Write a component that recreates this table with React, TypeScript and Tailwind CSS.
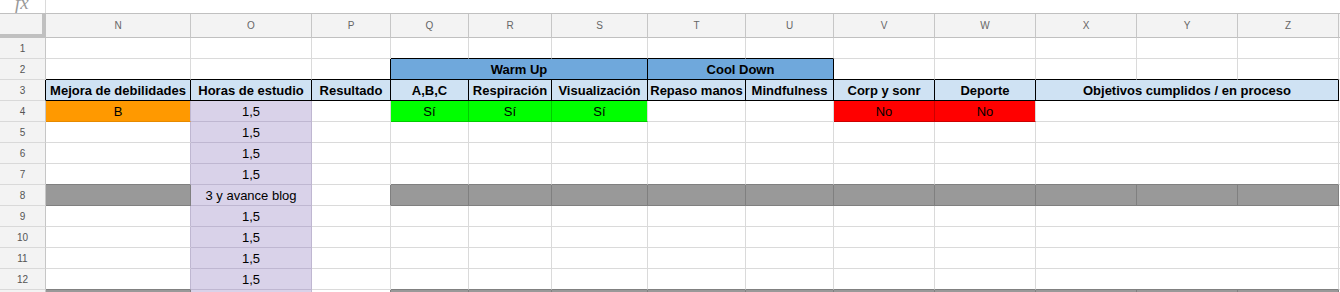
import clsx from "clsx";

type Fill = "white" | "orange" | "lav" | "green" | "red" | "gray" | "blue" | "pale";

const FILL: Record<Fill, string> = {
  white: "bg-white",
  orange: "bg-[#ff9900]",
  lav: "bg-[#d9d2e9]",
  green: "bg-[#00ff00]",
  red: "bg-[#ff0000]",
  gray: "bg-[#999999]",
  blue: "bg-[#6fa8dc]",
  pale: "bg-[#cfe2f3]",
};

const RIGHT: Record<string, string> = {
  light: "border-r-[#dadada]",
  dark: "border-r-[#808080]",
  lav: "border-r-[#bfb7d1]",
  green: "border-r-[#00cc00]",
  red: "border-r-[#cc0000]",
  orange: "border-r-[#e68a00]",
  black: "border-r-black",
};

const BOTTOM: Record<string, string> = {
  light: "border-b-[#dadada]",
  dark: "border-b-[#808080]",
  lav: "border-b-[#bfb7d1]",
  green: "border-b-[#00cc00]",
  red: "border-b-[#cc0000]",
  orange: "border-b-[#e68a00]",
  black: "border-b-black",
};

const LETTERS = ["N", "O", "P", "Q", "R", "S", "T", "U", "V", "W", "X", "Y", "Z"];

const GRID =
  "grid grid-cols-[46px_145px_121px_79px_78px_83px_96px_98px_88px_101px_101px_101px_101px_101px_1fr]";

type CellProps = {
  span?: number;
  fill?: Fill;
  r?: string;
  b?: string;
  bold?: boolean;
  children?: React.ReactNode;
};

function Cell({ span = 1, fill = "white", r = "light", b = "light", bold, children }: CellProps) {
  return (
    <div
      className={clsx(
        "h-[21px] border-r border-b pt-[2px] text-center text-[13px] leading-[18px] whitespace-nowrap overflow-hidden text-black",
        span === 2 && "col-span-2",
        span === 3 && "col-span-3",
        FILL[fill],
        RIGHT[r],
        BOTTOM[b],
        bold && "font-bold"
      )}
    >
      {children}
    </div>
  );
}

function RowHead({ n, black }: { n: number; black?: boolean }) {
  return (
    <div
      className={clsx(
        "h-[21px] border-r border-b border-b-[#d9d9d9] bg-[#f3f3f3] flex items-center justify-center text-[10px] text-[#555]",
        black ? "border-r-black" : "border-r-[#c6c6c6]"
      )}
    >
      {n}
    </div>
  );
}

function Filler({ b = "light" }: { b?: string }) {
  return <div className={clsx("h-[21px] bg-white border-b", BOTTOM[b])} />;
}

type RowSpec = { n: number; fills: Fill[]; texts: Record<number, string>; merged: boolean };

const rows: RowSpec[] = [
  {
    n: 4,
    fills: ["orange", "lav", "white", "green", "green", "green", "white", "white", "red", "red", "white", "white", "white"],
    texts: { 0: "B", 1: "1,5", 3: "Sí", 4: "Sí", 5: "Sí", 8: "No", 9: "No" },
    merged: true,
  },
  ...[5, 6, 7].map((n) => ({
    n,
    fills: ["white", "lav", ...Array(11).fill("white")] as Fill[],
    texts: { 1: "1,5" },
    merged: true,
  })),
  {
    n: 8,
    fills: ["gray", "lav", "white", ...Array(10).fill("gray")] as Fill[],
    texts: { 1: "3 y avance blog" },
    merged: false,
  },
  ...[9, 10, 11, 12].map((n) => ({
    n,
    fills: ["white", "lav", ...Array(11).fill("white")] as Fill[],
    texts: { 1: "1,5" },
    merged: true,
  })),
  {
    n: 13,
    fills: ["gray", "lav", "white", ...Array(10).fill("gray")] as Fill[],
    texts: {},
    merged: false,
  },
];

function edge(a: Fill, b: Fill | undefined): string {
  if (a === "gray" || b === "gray") return "dark";
  if (a === "lav" || b === "lav") return "lav";
  if (b && a === b && a !== "white") return a;
  return "light";
}

function DataRow({ row, below }: { row: RowSpec; below?: RowSpec }) {
  const cells: React.ReactNode[] = [];
  const last = row.merged ? 10 : 13;
  for (let i = 0; i < last; i++) {
    const f = row.fills[i];
    const right = i + 1 < 13 ? row.fills[i + 1] : undefined;
    const bottom = below ? below.fills[i] : undefined;
    let b = edge(f, bottom);
    if (b === "light" && f !== "white") b = f;
    cells.push(
      <Cell key={i} fill={f} r={i === 0 && f !== "gray" ? "lav" : edge(f, right)} b={b}>
        {row.texts[i]}
      </Cell>
    );
  }
  if (row.merged) {
    cells.push(<Cell key="xyz" span={3} b={below && below.fills[10] === "gray" ? "dark" : "light"} />);
  }
  return (
    <>
      <RowHead n={row.n} />
      {cells}
      <Filler />
    </>
  );
}

export default function App() {
  return (
    <div className="w-[1340px] h-[292px] overflow-hidden bg-white font-['Liberation_Sans',Arial,sans-serif]">
      {/* formula bar */}
      <div className="flex h-[14px] border-b border-[#c0c0c0]">
        <div className="w-[46px] border-r border-[#dadada] overflow-hidden">
          <div className="-mt-[7px] pl-[15px] font-['Liberation_Serif',serif] italic text-[19px] leading-none text-[#999]">
            fx
          </div>
        </div>
        <div className="flex-1" />
      </div>

      <div className={GRID}>
        {/* column letters */}
        <div className="h-[24px] bg-[#f3f3f3] border-r-4 border-b-4 border-[#c0c0c0]" />
        {LETTERS.map((l) => (
          <div
            key={l}
            className="h-[24px] bg-[#f3f3f3] border-r border-b border-r-[#c6c6c6] border-b-[#c0c0c0] flex items-center justify-center text-[10px] text-[#666]"
          >
            {l}
          </div>
        ))}
        <div className="h-[24px] bg-[#f3f3f3] border-b border-[#c0c0c0]" />

        {/* row 1 */}
        <RowHead n={1} />
        {LETTERS.map((l, i) => (
          <Cell key={l} b={i >= 3 && i <= 7 ? "black" : "light"} />
        ))}
        <Filler />

        {/* row 2 */}
        <RowHead n={2} />
        <Cell b="black" />
        <Cell b="black" />
        <Cell b="black" r="black" />
        <Cell span={3} fill="blue" r="black" b="black" bold>
          Warm Up
        </Cell>
        <Cell span={2} fill="blue" r="black" b="black" bold>
          Cool Down
        </Cell>
        <Cell b="black" />
        <Cell b="black" />
        <Cell b="black" />
        <Cell b="black" />
        <Cell b="black" />
        <Filler />

        {/* row 3 */}
        <RowHead n={3} black />
        {[
          "Mejora de debilidades",
          "Horas de estudio",
          "Resultado",
          "A,B,C",
          "Respiración",
          "Visualización",
          "Repaso manos",
          "Mindfulness",
          "Corp y sonr",
          "Deporte",
        ].map((t) => (
          <Cell key={t} fill="pale" r="black" b="black" bold>
            {t}
          </Cell>
        ))}
        <Cell span={3} fill="pale" r="black" b="black" bold>
          Objetivos cumplidos / en proceso
        </Cell>
        <Filler />

        {rows.map((row, i) => (
          <DataRow key={row.n} row={row} below={rows[i + 1]} />
        ))}
      </div>
    </div>
  );
}
